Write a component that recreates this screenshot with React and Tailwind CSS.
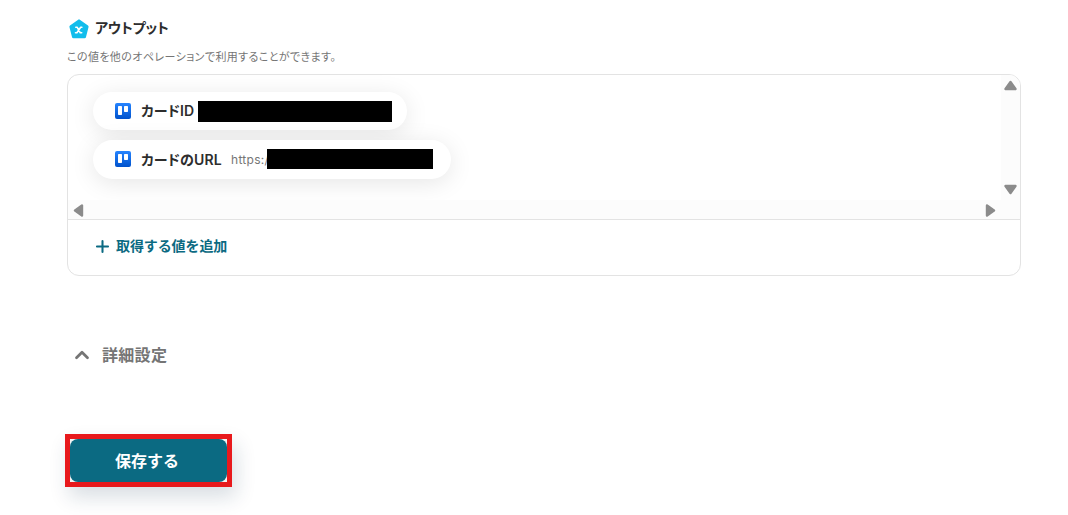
import React from 'react';
import { Plus, ChevronUp } from 'lucide-react';

const HexBadge = () => (
    <svg className="w-5 h-5 shrink-0" viewBox="0 0 20 20" fill="none">
        <path d="M10 1.8 L18.2 7.6 L15.6 17.8 H4.4 L1.8 7.6 Z" fill="#12bdec" stroke="#12bdec" strokeWidth="2.8" strokeLinejoin="round" />
        <path d="M6.8 8.2 H8.1 L11.3 13.8 H12.7 M12.9 8.2 H11.7 L7.9 13.8 H6.5" stroke="#fff" strokeWidth="1.6" strokeLinecap="round" strokeLinejoin="round" />
    </svg>
);

const TrelloIcon = () => (
    <svg className="w-4 h-4 shrink-0" viewBox="0 0 16 16">
        <defs>
            <linearGradient id="trello" x1="0" y1="0" x2="0" y2="1">
                <stop offset="0" stopColor="#2684ff" />
                <stop offset="1" stopColor="#0052cc" />
            </linearGradient>
        </defs>
        <rect width="16" height="16" rx="2" fill="url(#trello)" />
        <rect x="3" y="3" width="4" height="9" rx="0.7" fill="#fff" />
        <rect x="9" y="3" width="4" height="6" rx="0.7" fill="#fff" />
    </svg>
);

const Arrow = ({ className }) => (
    <svg className={`w-[13px] h-[13px] ${className}`} viewBox="0 0 13 13">
        <path d="M6.5 3 L11.5 10 H1.5 Z" fill="#8b8b8b" stroke="#8b8b8b" strokeWidth="2.4" strokeLinejoin="round" />
    </svg>
);

const Pill = ({ className, children }) => (
    <div className={`flex items-center rounded-full bg-white pl-[22px] shadow-[0_4px_24px_rgba(0,0,0,0.1)] ${className}`}>
        <TrelloIcon />
        {children}
    </div>
);

const App = () => {
    return (
        <div className="h-[515px] overflow-hidden bg-white pl-[67px] text-[#2d2d2d] font-['Inter','Noto_Sans_CJK_JP',sans-serif]">
            <div className="flex items-center pt-[19px] pl-[2px]">
                <HexBadge />
                <h2 className="ml-[6px] pb-[2px] text-[14px] leading-[18px] font-semibold tracking-[-0.15px] [font-feature-settings:'palt']">アウトプット</h2>
            </div>
            <p className="mt-[10px] text-[11px] leading-4 tracking-[0.4px] text-[#757575] whitespace-nowrap [font-feature-settings:'palt']">
                この値を他のオペレーションで利用することができます。
            </p>

            {/* Output values */}
            <div className="mt-[9px] w-[954px] h-[202px] rounded-xl border border-[#e3e3e3] overflow-hidden">
                <div className="flex h-[125px]">
                    <div className="flex-1 overflow-hidden pt-[17px] pl-[25px]">
                        <Pill className="w-[314px] h-[38px]">
                            <span className="ml-[10px] w-[54px] pb-[2px] text-[14px] font-semibold tracking-[0.1px] whitespace-nowrap [font-feature-settings:'palt']">カードID</span>
                            <span className="ml-[3px] w-[194px] h-[21px] bg-black" />
                        </Pill>
                        <Pill className="mt-[10px] w-[358px] h-[39px] pb-px">
                            <span className="ml-[10px] w-[81px] text-[14px] font-semibold tracking-[0.1px] whitespace-nowrap [font-feature-settings:'palt']">カードのURL</span>
                            <span className="ml-[9px] pt-px text-[12px] tracking-[0.3px] text-[#757575] whitespace-nowrap">https:/</span>
                            <span className="-ml-[2px] w-[166px] h-[20px] mb-px bg-black" />
                        </Pill>
                    </div>
                    <div className="flex flex-col items-center justify-between w-[19px] bg-[#fcfcfc] pt-[4px] pb-[4px]">
                        <Arrow className="" />
                        <Arrow className="rotate-180" />
                    </div>
                </div>
                <div className="flex items-center justify-between h-5 bg-[#fcfcfc] border-b border-[#e3e3e3] pl-[4px] pr-[23px] pt-px">
                    <Arrow className="-rotate-90" />
                    <Arrow className="rotate-90" />
                </div>
                <button className="flex items-center h-[54px] pl-[25px] text-[14px] font-semibold text-[#0b6a82]">
                    <Plus className="w-[19px] h-[19px] mb-px" strokeWidth={2.6} />
                    <span className="ml-[4px] pb-[3px] tracking-[-0.1px]">取得する値を追加</span>
                </button>
            </div>

            <div className="flex items-center mt-[67px] h-6 pl-[4px] text-[#757575]">
                <ChevronUp className="w-[22px] h-[22px]" strokeWidth={3} />
                <span className="ml-[9px] text-[16px] font-semibold tracking-[0.3px]">詳細設定</span>
            </div>

            {/* Save button, outlined in red */}
            <div className="-ml-[2px] mt-[67px] w-[167px] h-[53px] bg-[#f4f4f4] border-5 border-[#e8191c] shadow-[4px_10px_20px_rgba(20,50,80,0.16)]">
                <button className="block w-full h-full rounded-lg bg-[#0b6a82] pr-[3px] text-[16px] font-bold text-white">保存する</button>
            </div>
        </div>
    );
};

export default App;
